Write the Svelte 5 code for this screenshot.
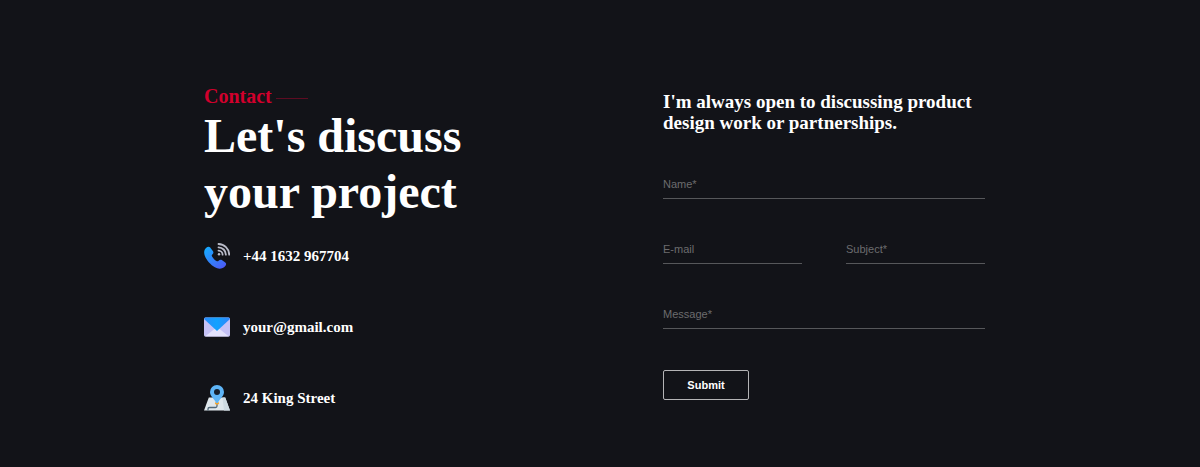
<script>
  let name = $state('');
  let email = $state('');
  let subject = $state('');
  let message = $state('');
</script>

<main class="contact">
  <section class="info">
    <p class="eyebrow">Contact <span class="rule"></span></p>
    <h1>Let's discuss<br />your project</h1>
    <ul>
      <li>
        <svg viewBox="0 0 26 26" aria-hidden="true">
          <defs>
            <linearGradient id="phone" x1="0" y1="0" x2="0.8" y2="1">
              <stop offset="0" stop-color="#12b0ff" />
              <stop offset="1" stop-color="#4b5cf5" />
            </linearGradient>
          </defs>
          <path d="M2 5C3.500 3.500 5 3.200 6 4.300L9 8.200C9.800 9.400 9.400 10.400 8.300 11.400C7.500 12.200 7.600 12.800 8.200 13.700C9.400 15.600 10.700 16.900 12.400 18C13.300 18.500 13.900 18.500 14.600 17.700C15.600 16.700 16.600 16.300 17.800 17L21.300 19.600C22.500 20.600 22.300 21.700 21.300 22.900C18.700 25.900 14.800 26.600 10.900 24.300C6.800 21.900 2.700 17.500 .900 13C-.300 9.800 -.100 7 2 5Z" fill="url(#phone)" />
          <g fill="none" stroke="#b9bbc8" stroke-width="1.800" stroke-linecap="round">
            <path d="M14.500 1A11 11 0 0 1 25.200 11.700M14.500 4.300A7.500 7.500 0 0 1 21.900 11.700M14.500 7.600A4.200 4.200 0 0 1 18.600 11.700" />
          </g>
          <circle cx="15" cy="11.200" r="1.200" fill="#b9bbc8" />
        </svg>
        <span>+44 1632 967704</span>
      </li>
      <li>
        <svg viewBox="0 0 26 26" aria-hidden="true">
          <defs>
            <linearGradient id="flap" x1="0" y1="0" x2="1" y2="0">
              <stop offset="0" stop-color="#2b8cfb" />
              <stop offset="0.5" stop-color="#12a2ff" />
              <stop offset="1" stop-color="#2f86fa" />
            </linearGradient>
          </defs>
          <rect y="3.500" width="26" height="19" rx="1.500" fill="#c5c2f6" />
          <path d="M1 22.500L13 13L25 22.500Z" fill="#e3e2fc" />
          <path d="M1.500 3.500H24.500Q26 3.500 26 5L13 17L0 5Q0 3.500 1.500 3.500Z" fill="url(#flap)" />
        </svg>
        <span>your@gmail.com</span>
      </li>
      <li>
        <svg viewBox="0 0 26 26" aria-hidden="true">
          <path d="M4.800 12.500H21.200L26 25.500H0Z" fill="#dfe7ec" />
          <path d="M18.500 12.500H21.200L26 25.500H20Z" fill="#cfdbe2" />
          <path d="M4 25.500V24Q4 22.500 5.500 22.500H11.500Q13 22.500 13 21V19" fill="none" stroke="#516879" stroke-width="1.300" />
          <ellipse cx="13" cy="18.300" rx="2.200" ry="1.400" fill="#f3a52f" />
          <path d="M13 0A7 7 0 0 0 6 7C6 11.500 10.300 13.600 12.200 18H13.800C15.700 13.600 20 11.500 20 7A7 7 0 0 0 13 0Z" fill="#5eb5f7" />
          <circle cx="13" cy="7" r="3" fill="#17202c" />
        </svg>
        <span>24 King Street</span>
      </li>
    </ul>
  </section>

  <section class="write">
    <h2>I'm always open to discussing product<br />design work or partnerships.</h2>
    <form onsubmit={(event) => event.preventDefault()}>
      <input class="wide" aria-label="Name" placeholder="Name*" bind:value={name} />
      <input type="email" aria-label="E-mail" placeholder="E-mail" bind:value={email} />
      <input aria-label="Subject" placeholder="Subject*" bind:value={subject} />
      <input class="wide" aria-label="Message" placeholder="Message*" bind:value={message} />
      <button type="submit">Submit</button>
    </form>
  </section>
</main>

<style>
  :global(body) {
    margin: 0;
    background: #121318;
  }

  .contact {
    box-sizing: border-box;
    display: grid;
    grid-template-columns: 459fr 322fr;
    padding: 84px 215px 53px 17%;
    color: #fff;
    font-family: "Liberation Serif", "Times New Roman", serif;
    font-weight: 700;
  }

  .eyebrow {
    display: flex;
    align-items: center;
    gap: 4px;
    margin: 0;
    color: #d1002c;
    font-size: 20px;
    line-height: 24px;
  }

  .rule {
    width: 32px;
    height: 1px;
    margin-top: 4px;
    background: #5e0c22;
  }

  h1 {
    margin: 0;
    font-size: 48px;
    line-height: 56px;
  }

  ul {
    display: grid;
    gap: 45px;
    margin: 23px 0 0;
    padding: 0;
    list-style: none;
  }

  li {
    display: flex;
    align-items: center;
    gap: 13px;
    font-size: 15px;
    line-height: 26px;
  }

  svg {
    display: block;
    width: 26px;
    height: 26px;
  }

  h2 {
    margin: 7px 0 0;
    font-size: 19px;
    line-height: 21px;
  }

  form {
    display: grid;
    grid-template-columns: 1fr 1fr;
    gap: 35px 44px;
    margin-top: 36px;
  }

  input {
    box-sizing: border-box;
    width: 100%;
    min-width: 0;
    height: 30px;
    padding: 0;
    border: 0;
    border-bottom: 1px solid #56575a;
    border-radius: 0;
    outline: 0;
    background: transparent;
    color: #fff;
    font: 11px "Liberation Sans", Arial, sans-serif;
  }

  input::placeholder {
    color: #6c6c6e;
    opacity: 1;
  }

  input:focus {
    border-color: #d1002c;
  }

  .wide {
    grid-column: 1 / -1;
  }

  button {
    justify-self: start;
    width: 86px;
    height: 30px;
    margin-top: 6px;
    padding: 0;
    border: 1px solid #b4b4b6;
    border-radius: 2px;
    background: transparent;
    color: #fff;
    font: 700 11px "Liberation Sans", Arial, sans-serif;
    cursor: pointer;
  }
</style>
